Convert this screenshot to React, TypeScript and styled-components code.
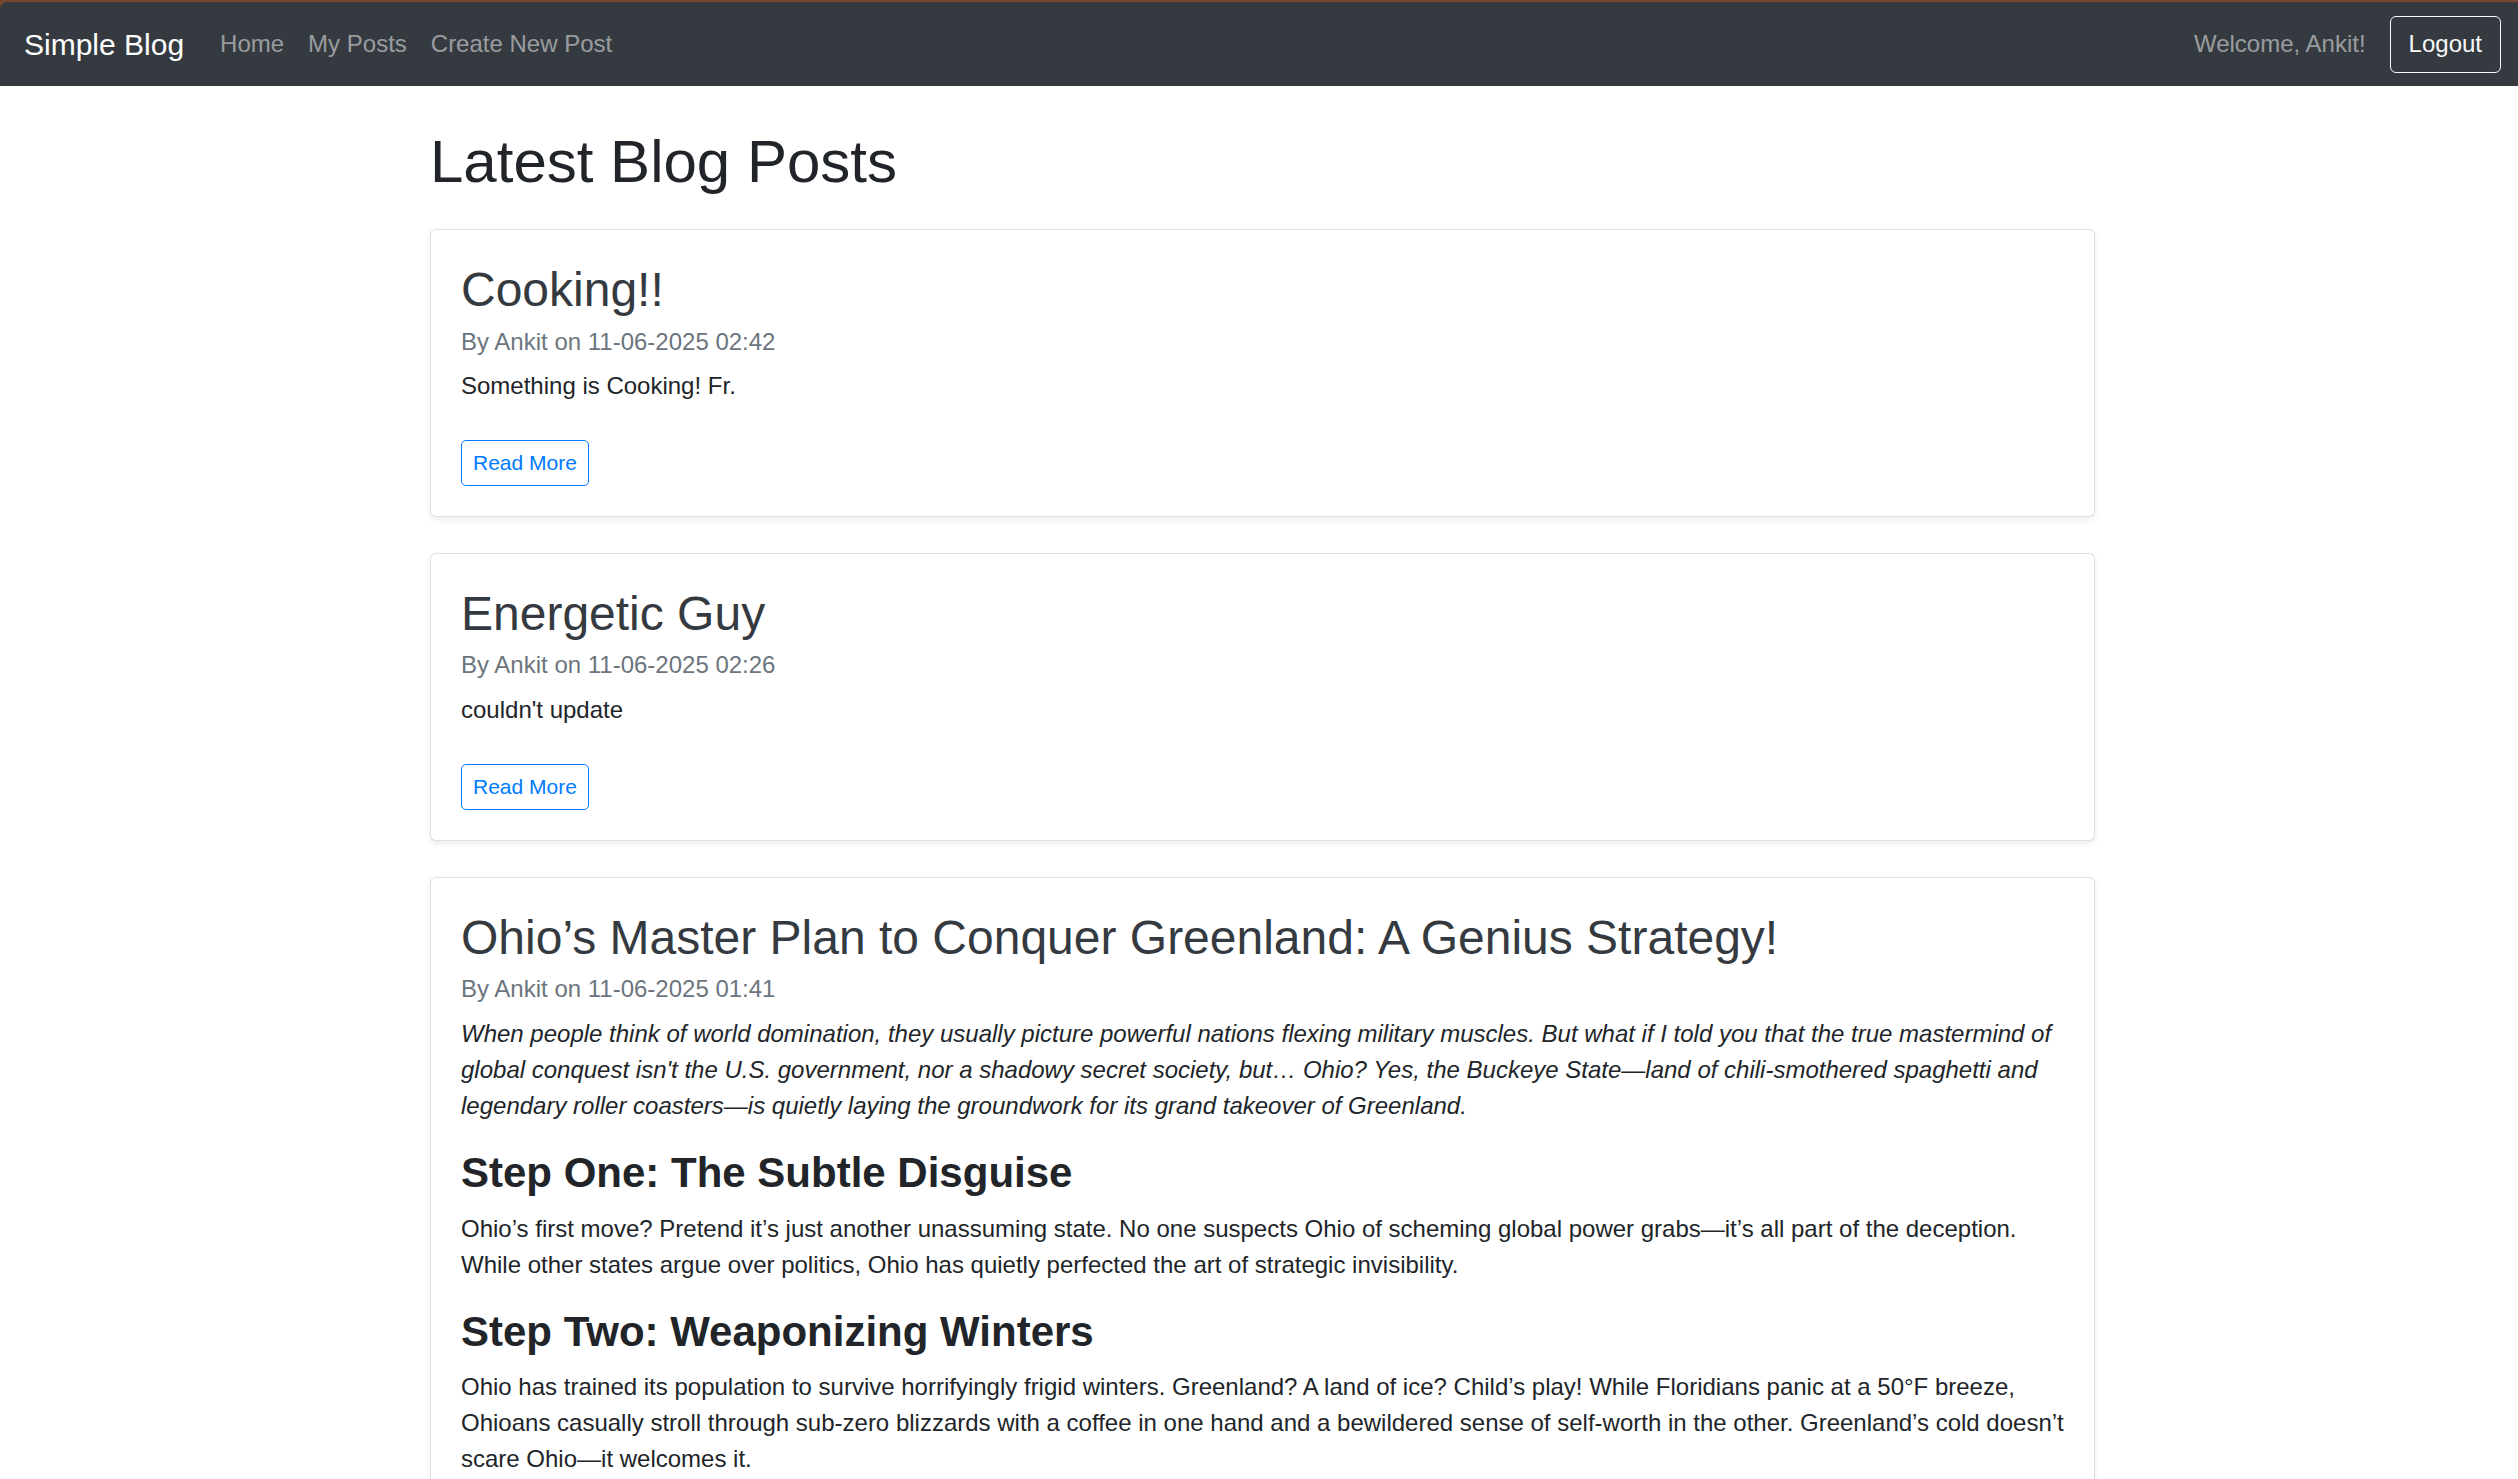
import React from "react";
import styled, { createGlobalStyle } from "styled-components";

const GlobalStyle = createGlobalStyle`
  html { scrollbar-width: none; }
  html::-webkit-scrollbar { display: none; }
  body {
    margin: 0;
    font-family: "Liberation Sans", Arial, sans-serif;
    font-size: 24px;
    line-height: 1.5;
    color: #212529;
    background: #fff;
    overflow-x: hidden;
  }
  * { box-sizing: border-box; }
`;

const Page = styled.div`
  width: 2525px;
  background: #fff;
`;

const WindowFrame = styled.div`
  background: #77472f;
  padding-top: 2px;
`;

const Navbar = styled.nav`
  display: flex;
  align-items: center;
  height: 84px;
  padding: 12px 24px;
  background: #343a40;
  border-radius: 7px 7px 0 0;
`;

const Brand = styled.a`
  font-size: 30px;
  line-height: 45px;
  padding: 7.5px 0;
  margin-right: 24px;
  color: #fff;
  text-decoration: none;
  white-space: nowrap;
`;

const NavList = styled.ul`
  display: flex;
  list-style: none;
  margin: 0;
  padding: 0;
`;

const NavLink = styled.a`
  display: block;
  padding: 12px;
  font-size: 24px;
  line-height: 36px;
  color: rgba(255, 255, 255, 0.5);
  text-decoration: none;
`;

const NavRight = styled.div`
  display: flex;
  align-items: center;
  gap: 24px;
  margin-left: auto;
`;

const NavText = styled.span`
  padding: 12px 0;
  font-size: 24px;
  line-height: 36px;
  color: rgba(255, 255, 255, 0.5);
`;

const OutlineLightButton = styled.button`
  font-family: inherit;
  font-size: 24px;
  line-height: 36px;
  padding: 9.5px 18px;
  color: #f8f9fa;
  background: transparent;
  border: 1px solid #f8f9fa;
  border-radius: 6px;
  cursor: pointer;
`;

const Container = styled.main`
  max-width: 1710px;
  margin: 0 auto;
  padding: 40px 22.5px 40px;
`;

const PageTitle = styled.h1`
  font-size: 60px;
  font-weight: 500;
  line-height: 1.2;
  margin: 0 0 31px;
  color: #212529;
`;

const PostList = styled.div`
  display: flex;
  flex-direction: column;
  gap: 36px;
`;

const Card = styled.article`
  background: #fff;
  border: 1px solid rgba(0, 0, 0, 0.125);
  border-radius: 6px;
  box-shadow: 0 3px 6px rgba(0, 0, 0, 0.075);
`;

const CardBody = styled.div`
  padding: 31px 30px 30px;
`;

const CardTitle = styled.h2`
  font-size: 48px;
  font-weight: 500;
  line-height: 1.2;
  margin: 0 0 18px;
  color: #343a40;
`;

const CardSubtitle = styled.h6`
  font-size: 24px;
  font-weight: 500;
  line-height: 1.2;
  margin: -9px 0 12px;
  color: #6c757d;
`;

const CardText = styled.div`
  p {
    margin: 0 0 24px;
  }
  h3 {
    font-size: 42px;
    font-weight: 700;
    line-height: 1.2;
    margin: 0 0 12px;
    color: #212529;
  }
`;

const ReadMore = styled.a`
  display: inline-block;
  margin-top: 12px;
  font-size: 21px;
  line-height: 31.5px;
  padding: 6px 11px;
  color: #007bff;
  border: 1px solid #007bff;
  border-radius: 5px;
  text-decoration: none;
`;

type Block = { kind: "p" | "em" | "h3"; text: string };
type Post = { title: string; author: string; date: string; blocks: Block[]; more?: boolean };

const posts: Post[] = [
  {
    title: "Cooking!!",
    author: "Ankit",
    date: "11-06-2025 02:42",
    blocks: [{ kind: "p", text: "Something is Cooking! Fr." }],
    more: true,
  },
  {
    title: "Energetic Guy",
    author: "Ankit",
    date: "11-06-2025 02:26",
    blocks: [{ kind: "p", text: "couldn't update" }],
    more: true,
  },
  {
    title: "Ohio’s Master Plan to Conquer Greenland: A Genius Strategy!",
    author: "Ankit",
    date: "11-06-2025 01:41",
    blocks: [
      {
        kind: "em",
        text: "When people think of world domination, they usually picture powerful nations flexing military muscles. But what if I told you that the true mastermind of global conquest isn't the U.S. government, nor a shadowy secret society, but… Ohio? Yes, the Buckeye State—land of chili-smothered spaghetti and legendary roller coasters—is quietly laying the groundwork for its grand takeover of Greenland.",
      },
      { kind: "h3", text: "Step One: The Subtle Disguise" },
      {
        kind: "p",
        text: "Ohio’s first move? Pretend it’s just another unassuming state. No one suspects Ohio of scheming global power grabs—it’s all part of the deception. While other states argue over politics, Ohio has quietly perfected the art of strategic invisibility.",
      },
      { kind: "h3", text: "Step Two: Weaponizing Winters" },
      {
        kind: "p",
        text: "Ohio has trained its population to survive horrifyingly frigid winters. Greenland? A land of ice? Child’s play! While Floridians panic at a 50°F breeze, Ohioans casually stroll through sub-zero blizzards with a coffee in one hand and a bewildered sense of self-worth in the other. Greenland’s cold doesn’t scare Ohio—it welcomes it.",
      },
      { kind: "h3", text: "Step Three: The Corn Diplomacy" },
      {
        kind: "p",
        text: "Every empire needs resources, and Ohio has plenty of corn. Greenland will soon find itself receiving generous shipments of sweet corn, popcorn and cornbread, until the island simply cannot imagine life without them.",
      },
    ],
    more: true,
  },
];

function PostCard({ post }: { post: Post }) {
  return (
    <Card>
      <CardBody>
        <CardTitle>{post.title}</CardTitle>
        <CardSubtitle>
          By {post.author} on {post.date}
        </CardSubtitle>
        <CardText>
          {post.blocks.map((b, i) =>
            b.kind === "h3" ? (
              <h3 key={i}>{b.text}</h3>
            ) : b.kind === "em" ? (
              <p key={i}>
                <em>{b.text}</em>
              </p>
            ) : (
              <p key={i}>{b.text}</p>
            )
          )}
        </CardText>
        {post.more && <ReadMore href="#">Read More</ReadMore>}
      </CardBody>
    </Card>
  );
}

export default function App() {
  return (
    <Page>
      <GlobalStyle />
      <WindowFrame>
        <Navbar>
          <Brand href="#">Simple Blog</Brand>
          <NavList>
            <li>
              <NavLink href="#">Home</NavLink>
            </li>
            <li>
              <NavLink href="#">My Posts</NavLink>
            </li>
            <li>
              <NavLink href="#">Create New Post</NavLink>
            </li>
          </NavList>
          <NavRight>
            <NavText>Welcome, Ankit!</NavText>
            <OutlineLightButton>Logout</OutlineLightButton>
          </NavRight>
        </Navbar>
      </WindowFrame>
      <Container>
        <PageTitle>Latest Blog Posts</PageTitle>
        <PostList>
          {posts.map((p) => (
            <PostCard key={p.title} post={p} />
          ))}
        </PostList>
      </Container>
    </Page>
  );
}
